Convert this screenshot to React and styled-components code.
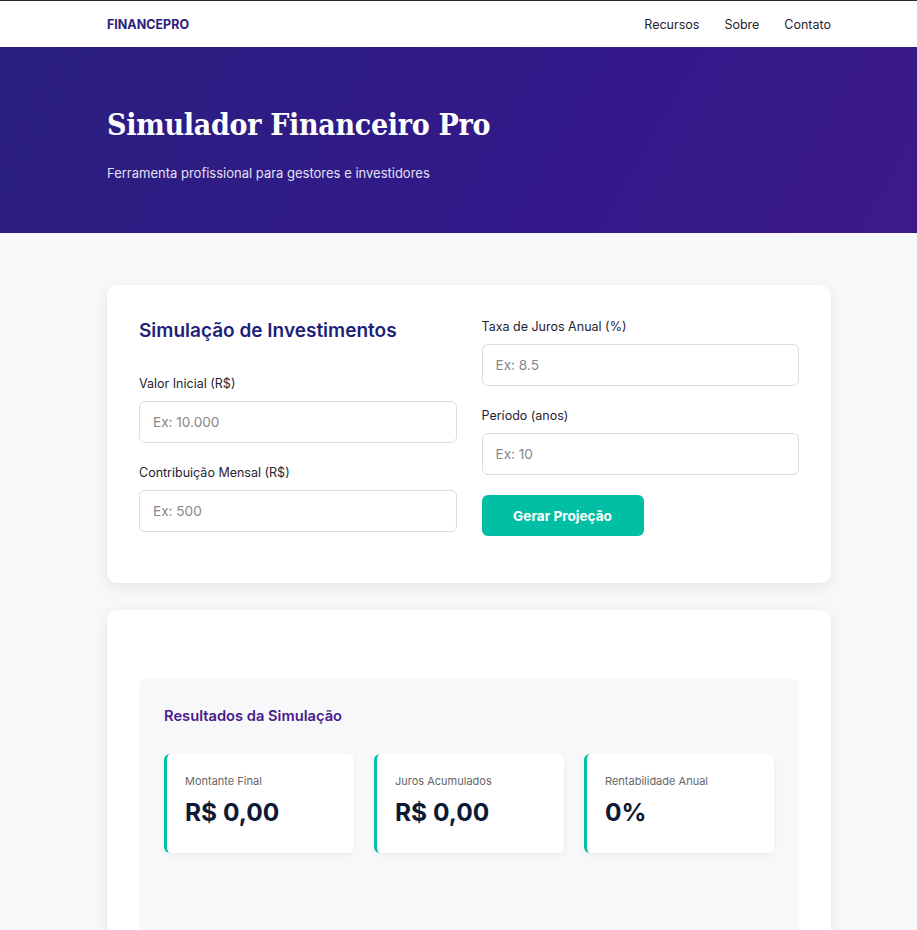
import styled, { createGlobalStyle } from "styled-components";

const GlobalStyle = createGlobalStyle`
  * {
    box-sizing: border-box;
  }
  body {
    margin: 0;
    font-family: Inter, "Noto Sans", sans-serif;
    background: #f7f8fa;
    color: #1f2937;
  }
`;

const Nav = styled.header`
  background: #fff;
  border-top: 1px solid #2b2b2b;
  height: 47px;
  display: flex;
  align-items: center;
`;

const Container = styled.div`
  width: 724px;
  margin-left: 107px;
`;

const NavInner = styled(Container)`
  display: flex;
  align-items: center;
  justify-content: space-between;
`;

const Logo = styled.span`
  font-size: 12.5px;
  font-weight: 700;
  color: #2b2180;
`;

const Links = styled.nav`
  display: flex;
  gap: 25px;
  a {
    font-size: 12.5px;
    color: #1f2430;
    text-decoration: none;
  }
`;

const Hero = styled.section`
  background: linear-gradient(120deg, #2a1f7f 0%, #33198a 60%, #3d1a88 100%);
  padding: 58px 0 50px;
  color: #fff;
  h1 {
    margin: 0 0 18px;
    font-family: "DejaVu Serif Condensed", "DejaVu Serif", serif;
    font-stretch: condensed;
    font-size: 30px;
    line-height: 40px;
    font-weight: 700;
    letter-spacing: -0.3px;
  }
  p {
    margin: 0;
    font-size: 13px;
    line-height: 20px;
    color: #e4e0f4;
  }
`;

const Main = styled(Container)`
  padding: 52px 0 0;
  display: flex;
  flex-direction: column;
  gap: 27px;
`;

const Card = styled.div`
  background: #fff;
  border-radius: 10px;
  box-shadow: 0 4px 14px rgba(0, 0, 0, 0.08);
  padding: ${(p) => p.$pad || "32px 32px 31px"};
`;

const FormGrid = styled.div`
  display: grid;
  grid-template-columns: 1fr 1fr;
  column-gap: 25px;
`;

const Column = styled.div`
  display: flex;
  flex-direction: column;
`;

const Title = styled.h2`
  margin: 0 0 29px;
  font-size: 19px;
  line-height: 28px;
  font-weight: 600;
  color: #1e1f7a;
`;

const Field = styled.div`
  display: flex;
  flex-direction: column;
  gap: 8px;
  margin-bottom: 20px;
  label {
    font-size: 12.5px;
    line-height: 19px;
    color: #1f2430;
  }
`;

const Input = styled.input`
  height: 42px;
  border: 1px solid #dcdcdc;
  border-radius: 6px;
  padding: 0 13px;
  font-family: inherit;
  font-size: 13.6px;
  color: #222;
  outline: none;
  &::placeholder {
    color: #888;
  }
`;

const Button = styled.button`
  align-self: flex-start;
  width: 162px;
  height: 41px;
  border: none;
  border-radius: 6px;
  background: #00bfa5;
  color: #fff;
  font-family: inherit;
  font-size: 13.6px;
  font-weight: 700;
  cursor: pointer;
`;

const Spacer = styled.div`
  height: 37px;
`;

const Results = styled.div`
  background: #f7f8fa;
  border-radius: 8px;
  padding: 25px 25px 0;
  min-height: 320px;
  h3 {
    margin: 0 0 26px;
    font-size: 14.7px;
    line-height: 24px;
    font-weight: 600;
    color: #4b1a8c;
  }
`;

const StatGrid = styled.div`
  display: grid;
  grid-template-columns: repeat(3, 1fr);
  gap: 20px;
`;

const Stat = styled.div`
  background: #fff;
  border-left: 3px solid #00bfa5;
  border-radius: 6px;
  box-shadow: 0 2px 6px rgba(0, 0, 0, 0.05);
  height: 99px;
  padding: 19px 18px;
  span {
    display: block;
    font-size: 11px;
    line-height: 16px;
    color: #666;
    margin-bottom: 8px;
  }
  strong {
    display: block;
    font-size: 24.5px;
    line-height: 30px;
    font-weight: 700;
    color: #0e1a35;
  }
`;

const fieldsLeft = [
  { label: "Valor Inicial (R$)", ph: "Ex: 10.000" },
  { label: "Contribuição Mensal (R$)", ph: "Ex: 500" },
];

const fieldsRight = [
  { label: "Taxa de Juros Anual (%)", ph: "Ex: 8.5" },
  { label: "Período (anos)", ph: "Ex: 10" },
];

const stats = [
  { label: "Montante Final", value: "R$ 0,00" },
  { label: "Juros Acumulados", value: "R$ 0,00" },
  { label: "Rentabilidade Anual", value: "0%" },
];

const App = () => {
  return (
    <>
      <GlobalStyle />
      <Nav>
        <NavInner>
          <Logo>FINANCEPRO</Logo>
          <Links>
            <a href="#">Recursos</a>
            <a href="#">Sobre</a>
            <a href="#">Contato</a>
          </Links>
        </NavInner>
      </Nav>
      <Hero>
        <Container>
          <h1>Simulador Financeiro Pro</h1>
          <p>Ferramenta profissional para gestores e investidores</p>
        </Container>
      </Hero>
      <Main>
        <Card>
          <FormGrid>
            <Column>
              <Title>Simulação de Investimentos</Title>
              {fieldsLeft.map((f) => (
                <Field key={f.label}>
                  <label>{f.label}</label>
                  <Input placeholder={f.ph} />
                </Field>
              ))}
            </Column>
            <Column>
              {fieldsRight.map((f) => (
                <Field key={f.label}>
                  <label>{f.label}</label>
                  <Input placeholder={f.ph} />
                </Field>
              ))}
              <Button>Gerar Projeção</Button>
            </Column>
          </FormGrid>
        </Card>
        <Card $pad="32px 32px 0">
          <Spacer />
          <Results>
            <h3>Resultados da Simulação</h3>
            <StatGrid>
              {stats.map((s) => (
                <Stat key={s.label}>
                  <span>{s.label}</span>
                  <strong>{s.value}</strong>
                </Stat>
              ))}
            </StatGrid>
          </Results>
        </Card>
      </Main>
    </>
  );
};

export default App;
